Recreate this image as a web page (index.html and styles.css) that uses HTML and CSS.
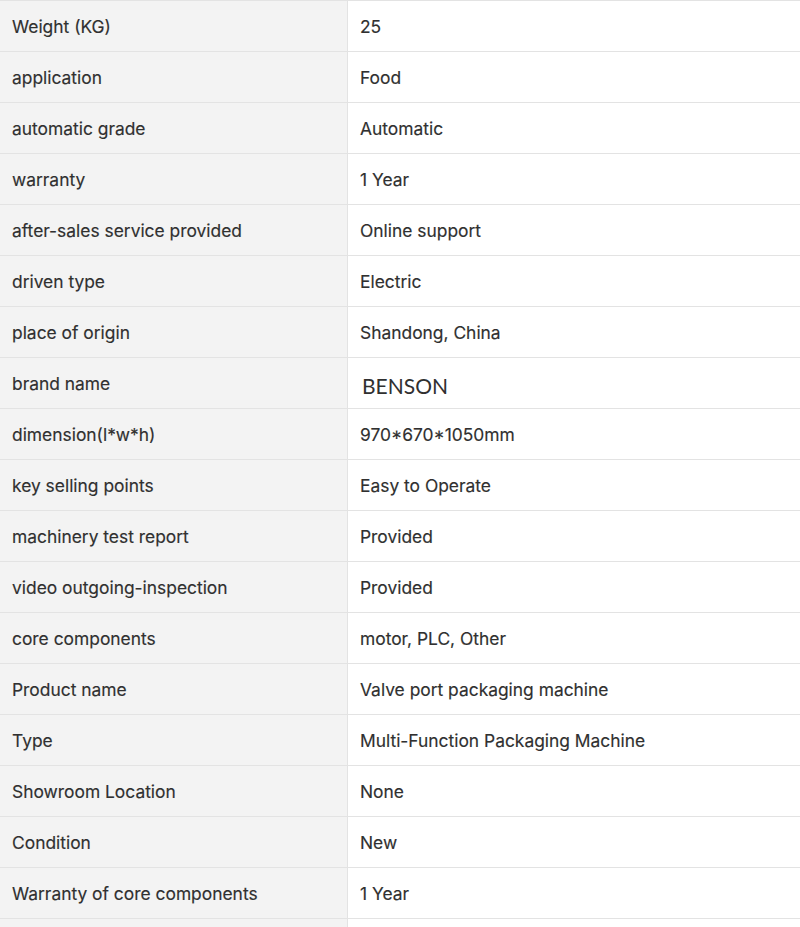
FILE: index.html
```html
<!DOCTYPE html>
<html>
<head>
<meta charset="utf-8">
<link rel="stylesheet" href="styles.css">
</head>
<body>
<table class="spec">
<tbody>
<tr><td class="k">Weight (KG)</td><td class="v">25</td></tr>
<tr><td class="k">application</td><td class="v">Food</td></tr>
<tr><td class="k">automatic grade</td><td class="v">Automatic</td></tr>
<tr><td class="k">warranty</td><td class="v">1 Year</td></tr>
<tr><td class="k">after-sales service provided</td><td class="v">Online support</td></tr>
<tr><td class="k">driven type</td><td class="v">Electric</td></tr>
<tr><td class="k">place of origin</td><td class="v">Shandong, China</td></tr>
<tr><td class="k">brand name</td><td class="v"><span class="brand">BENSON</span></td></tr>
<tr><td class="k">dimension(l*w*h)</td><td class="v">970*670*1050mm</td></tr>
<tr><td class="k">key selling points</td><td class="v">Easy to Operate</td></tr>
<tr><td class="k">machinery test report</td><td class="v">Provided</td></tr>
<tr><td class="k">video outgoing-inspection</td><td class="v">Provided</td></tr>
<tr><td class="k">core components</td><td class="v">motor, PLC, Other</td></tr>
<tr><td class="k">Product name</td><td class="v">Valve port packaging machine</td></tr>
<tr><td class="k">Type</td><td class="v">Multi-Function Packaging Machine</td></tr>
<tr><td class="k">Showroom Location</td><td class="v">None</td></tr>
<tr><td class="k">Condition</td><td class="v">New</td></tr>
<tr><td class="k">Warranty of core components</td><td class="v">1 Year</td></tr>
<tr><td class="k"></td><td class="v"></td></tr>
</tbody>
</table>
</body>
</html>
```
FILE: styles.css
```css
html, body {
  margin: 0;
  padding: 0;
  background: #ffffff;
}
body {
  font-family: Inter, "Liberation Sans", sans-serif;
  font-size: 17.4px;
  color: #303030;
}
.spec {
  width: 800px;
  border-collapse: collapse;
  table-layout: fixed;
}
.spec td {
  height: 49px;
  padding: 1px 12px 0;
  border-top: 1px solid #e3e3e3;
  border-bottom: 1px solid #e3e3e3;
  vertical-align: middle;
  white-space: nowrap;
  -webkit-text-stroke: 0.15px #303030;
}
.spec .k {
  width: 323px;
  background: #f3f3f3;
  border-right: 1px solid #e3e3e3;
}
.spec .v {
  background: #ffffff;
}
.brand {
  font-family: Lato, "Open Sans", sans-serif;
  font-size: 21px;
  display: inline-block;
  padding-top: 4px;
  padding-left: 2px;
  -webkit-text-stroke: 0;
}
```
